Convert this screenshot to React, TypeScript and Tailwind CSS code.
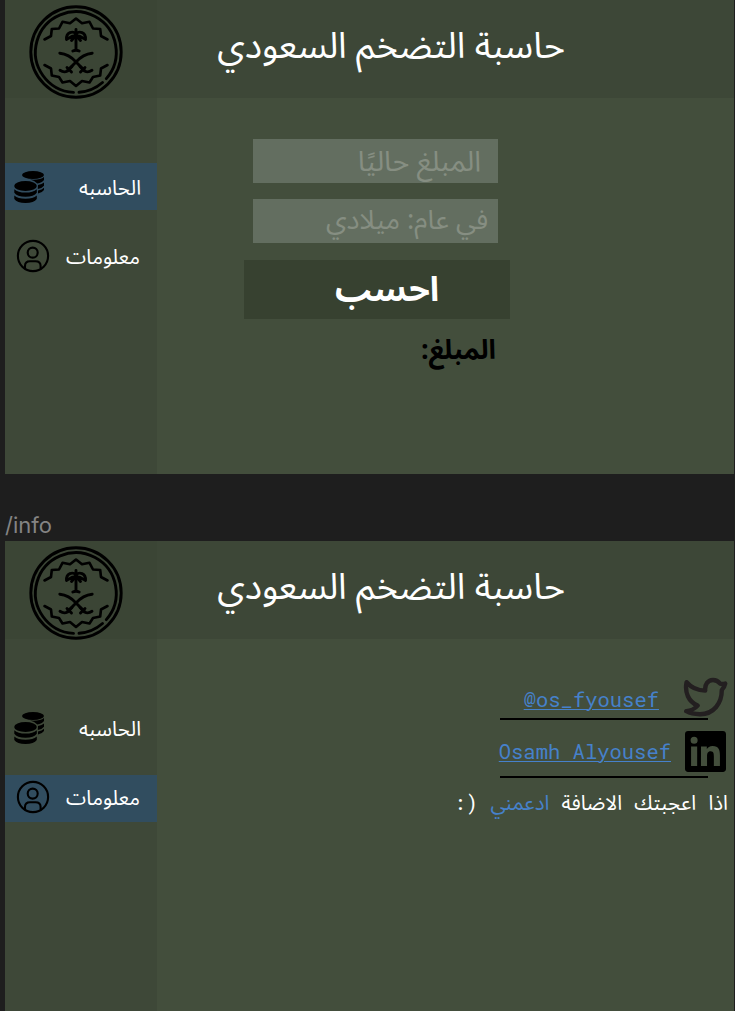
import React from "react";

const arabic = "font-['Noto_Sans_Arabic','Noto_Sans','DejaVu_Sans',sans-serif]";
const mono = "font-['Roboto_Mono','Noto_Sans_Arabic','DejaVu_Sans_Mono',monospace]";

function Emblem() {
  return (
    <svg className="relative block h-[94px] w-[94px]" viewBox="29 5 94 94" fill="none" stroke="#000" strokeWidth="2.9" strokeLinecap="round" strokeLinejoin="round">
      <circle cx="76" cy="52" r="45.2" />
      <path d="M73.5 92.4A40.4 40.4 0 1 1 106.3 78.6M102.5 82.5A40.4 40.4 0 0 1 79 92.3" />
      <path strokeWidth="2.6" d="M44.5 39.5L51 36L51.8 29L59 28.5L62.5 21.8L70 23.3L76 18.5L82 23.3L89.5 21.8L93 28.5L100.2 29L101 36L107.5 39.5" />
      <path strokeWidth="2.6" d="M44.5 65L51 68.5L51.8 75.5L59 77L62.5 82.5L70 81L76 86L82 81L89.5 82.5L93 77L100.2 75.5L101 68.5L107.5 65" />
      <path d="M76 29.5V50M72.8 51Q76 49.6 79.2 51" />
      <path d="M76 34C73 30.5 66 32 66.5 39.5C69 38 71 36 76 35.5C81 36 83 38 85.5 39.5C86 32 79 30.5 76 34M76 35.5L71.5 40.5M76 35.5L80.5 40.5" />
      <path d="M59.8 53.2Q69 54 76 62L84.5 70.5M92.2 53.2Q83 54 76 62L67.5 70.5" />
      <path d="M60 70.3Q64 73 67.5 71L72 66.5M67 67.5L71.5 72M92 70.3Q88 73 84.5 71L80 66.5M85 67.5L80.5 72" />
    </svg>
  );
}

function Coins() {
  return (
    <svg className="block h-[34px] w-[32px]" viewBox="14 170 32 34">
      <ellipse cx="33" cy="175" rx="11" ry="4" />
      <path d="M30 179.6Q40 180.4 44 177V180Q42 183 37.3 183.4Q34.5 180.6 30 179.6ZM38 185Q42 184.4 44 182.5V185.8Q42 188.5 37.8 189ZM38 190.5Q42 190 44 187.7V186.5V190Q42 193 38 193.4Z" />
      <ellipse cx="25.5" cy="186" rx="11.3" ry="5" />
      <path d="M14.3 189.2Q18 192.6 25.5 192.6T36.8 189.2V192.8Q34 196.6 25.5 196.8Q17 196.6 14.3 192.8ZM14.3 195.4Q18 198.7 25.5 198.7T36.8 195.4V198.9Q34 203 25.5 203Q17 203 14.3 198.9Z" />
    </svg>
  );
}

function Person() {
  return (
    <svg className="block h-[34px] w-[34px]" viewBox="16 239 34 34" fill="none" stroke="#000" strokeWidth="2.1">
      <circle cx="33" cy="256" r="15.1" />
      <circle cx="32.7" cy="252.6" r="5" />
      <path d="M25 268.5V266Q25 261.2 30 261.2H35.5Q40.6 261.2 40.6 266V268.5" />
    </svg>
  );
}

function Bird() {
  return (
    <svg className="block h-[40px] w-[46px]" viewBox="683 677 46 40" fill="none" stroke="#231f20" strokeWidth="4.4" strokeLinecap="round" strokeLinejoin="round">
      <path d="M686.6 682.2C691 687.5 697.5 690.6 705.2 690.6C704.6 684.3 708 680 713 680C716 680 718.2 681.3 720.2 683.7C722 684.2 723.5 684 725.2 683.5C724.6 686.3 723.6 688.3 721.8 690C721.8 703 714 714.2 700 714.2C694.5 714.2 690.3 713.5 686.3 711.2C690.5 710.8 694 709.6 697.6 705.6C688.5 701.5 684.5 692.5 686.6 682.2Z" />
    </svg>
  );
}

function LinkedIn() {
  return (
    <svg className="block h-[41px] w-[41px]" viewBox="0 0 24 24" fill="#000">
      <path d="M20.447 20.452h-3.554v-5.569c0-1.328-.027-3.037-1.852-3.037-1.853 0-2.136 1.445-2.136 2.939v5.667H9.351V9h3.414v1.561h.046c.477-.9 1.637-1.85 3.37-1.85 3.601 0 4.267 2.37 4.267 5.455v6.286zM5.337 7.433a2.062 2.062 0 1 1 0-4.125 2.062 2.062 0 0 1 0 4.125zm1.782 13.019H3.555V9h3.564v11.452zM22.225 0H1.771C.792 0 0 .774 0 1.729v20.542C0 23.227.792 24 1.771 24h20.451C23.2 24 24 23.227 24 22.271V1.729C24 .774 23.2 0 22.222 0h.003z" />
    </svg>
  );
}

function NavItem({ active, icon, label, className }: { active: boolean; icon: React.ReactNode; label: string; className: string }) {
  return (
    <a className={`flex h-[47px] items-center justify-between text-white ${active ? "bg-[#314d5f]" : ""}`}>
      {icon}
      <span dir="rtl" className={`whitespace-nowrap text-[20.4px] leading-[30px] ${arabic} ${className}`}>{label}</span>
    </a>
  );
}

function Panel({ page, className, children }: { page: "calc" | "info"; className: string; children: React.ReactNode }) {
  return (
    <section className={`flex w-[729px] flex-col overflow-hidden bg-[#434e3c] ${className}`}>
      <header className="flex h-[98px] shrink-0 bg-[#3d4737]">
        <div className="w-[152px] shrink-0 bg-[#3b4535] pl-6 pt-[5px]"><Emblem /></div>
        <h1 dir="rtl" className={`flex w-[408px] justify-start whitespace-nowrap pt-[17px] text-[36.2px] leading-[60px] text-white ${arabic}`}>
          حاسبة التضخم السعودي
        </h1>
      </header>
      <div className="flex grow">
        <nav className="flex w-[152px] shrink-0 flex-col gap-[24px] bg-[#3e4838] pt-[65px]">
          <NavItem active={page === "calc"} icon={<div className="pl-[9px]"><Coins /></div>} label="الحاسبه" className="pr-[16px] pt-[4px]" />
          <NavItem active={page === "info"} icon={<div className="pb-[3px] pl-[11px]"><Person /></div>} label="معلومات" className="pr-[17px]" />
        </nav>
        {children}
      </div>
    </section>
  );
}

export default function App() {
  return (
    <main className="h-[1011px] w-[735px] overflow-hidden bg-[#1e1e1e] pl-[5px]">
      <Panel page="calc" className="h-[474px]">
        <div dir="rtl" className={`ml-[87px] mt-[41px] flex w-[266px] flex-col items-start ${arabic}`}>
          <div className="mr-[12px] h-[44px] w-[245px] bg-[#636e60] pr-[17px] text-[28.6px] leading-[46px] text-[#868e82]">المبلغ حاليًا</div>
          <div className="mr-[12px] mt-[16px] h-[44px] w-[245px] bg-[#636e60] pr-[10px] text-[27.1px] leading-[43px] text-[#868e82]">في عام: ميلادي</div>
          <button className="mt-[17px] h-[59px] w-full bg-[#374130] pl-[20px] text-[34px] font-bold leading-[58px] text-white">احسب</button>
          <div className="mt-[10px] w-full pr-[14px] text-[27px] font-bold leading-[44px] text-black">المبلغ:</div>
        </div>
      </Panel>
      <div className="h-[67px] pt-[37px] font-['Inter'] text-[22px] leading-[28px] text-[#848484]">/info</div>
      <Panel page="info" className="h-[470px]">
        <div className="flex grow flex-col items-end">
          <div className="mt-[31px] flex h-[48px] items-center">
            <a className={`mr-[24px] pt-[12px] text-[20.5px] text-[#4681cb] underline decoration-1 underline-offset-2 ${mono}`}>@os_fyousef</a>
            <div className="mr-[5px] pt-[6px]"><Bird /></div>
          </div>
          <div className="mr-[26px] h-[2px] w-[208px] bg-black" />
          <div className="mt-[8px] flex h-[48px] items-center">
            <a className={`mr-[14px] pt-[1px] text-[20.5px] text-[#4681cb] underline decoration-1 underline-offset-2 ${mono}`}>Osamh Alyousef</a>
            <div className="mr-[8px] pb-[2px]"><LinkedIn /></div>
          </div>
          <div className="mr-[26px] h-[2px] w-[208px] bg-black" />
          <p dir="rtl" className={`mr-[6px] mt-[7px] whitespace-nowrap text-[20.5px] leading-[36px] text-white ${mono}`}>
            اذا اعجبتك الاضافة <a className="text-[#4681cb]">ادعمني</a> (:
          </p>
        </div>
      </Panel>
    </main>
  );
}
